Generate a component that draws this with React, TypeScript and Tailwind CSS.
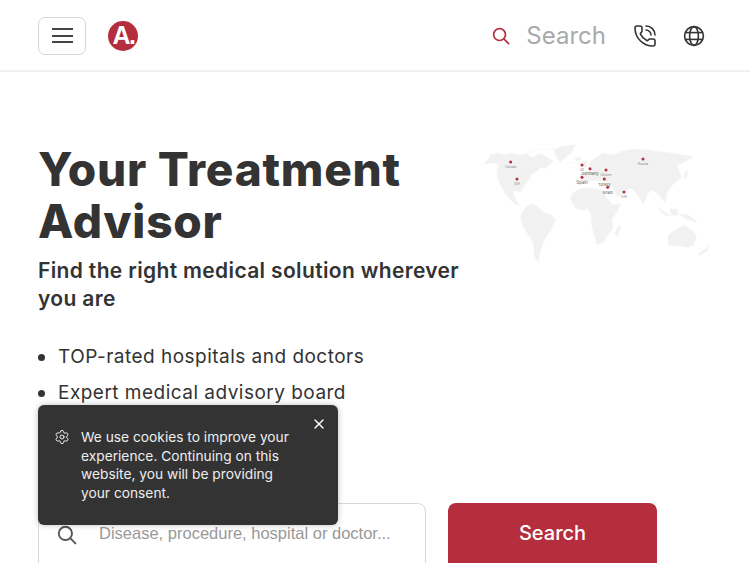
import { PhoneCall, Settings, X } from "lucide-react";

const land = [
  // North America
  "M42 102 L58 84 L62 74 L84 70 L104 74 L128 70 L150 76 L172 72 L186 84 L200 76 L216 72 L232 84 L250 92 L236 104 L226 116 L214 112 L200 124 L186 130 L178 146 L166 164 L158 174 L150 188 L138 180 L128 184 L134 204 L148 226 L136 222 L120 208 L104 188 L94 168 L84 146 L80 128 L86 104 L66 98 Z",
  // Greenland
  "M252 60 L272 50 L316 44 L306 66 L284 84 L270 96 L258 80 Z",
  // South America
  "M154 250 L168 232 L186 222 L206 232 L218 246 L240 254 L258 268 L248 288 L236 310 L224 328 L216 350 L208 372 L206 394 L196 386 L192 360 L190 338 L176 316 L160 288 L152 268 Z",
  // Africa
  "M300 206 L306 192 L328 176 L352 174 L386 178 L400 186 L414 208 L430 224 L452 222 L440 246 L426 268 L428 296 L412 318 L398 340 L380 342 L372 312 L364 280 L364 252 L354 238 L336 240 L316 234 Z",
  // Eurasia
  "M330 152 L332 132 L348 128 L364 118 L358 102 L372 86 L398 70 L430 76 L456 64 L490 58 L530 60 L570 66 L620 72 L670 80 L650 92 L634 100 L622 106 L628 128 L634 142 L614 158 L600 174 L590 192 L586 218 L572 202 L560 186 L540 180 L530 200 L520 222 L508 204 L496 184 L480 174 L458 190 L442 200 L432 180 L424 158 L400 154 L384 150 L366 152 Z",
  // Australia
  "M594 316 L614 302 L640 286 L664 300 L680 322 L670 346 L650 352 L624 346 L596 346 Z",
  // Madagascar
  "M442 292 L452 286 L448 306 L440 318 L435 312 Z",
  // South-east Asia islands
  "M566 234 L584 246 L602 258 L588 256 L570 244 Z",
  "M600 236 L624 240 L620 258 L604 254 Z",
  "M628 252 L660 258 L682 276 L650 268 Z",
  // UK, Iceland, Japan
  "M338 100 L348 92 L350 112 L340 114 Z",
  "M316 84 L332 80 L330 90 L318 92 Z",
  "M640 140 L650 122 L654 130 L646 146 Z",
  // New Zealand
  "M684 372 L716 350 L712 362 L690 376 Z",
];
const pins: [number, number, string, number][] = [
  [122, 96, "Canada", 9],
  [141, 147, "USA", 9],
  [336, 105, "UK", 9],
  [360, 116, "Germany", 12],
  [336, 142, "Spain", 13],
  [408, 120, "Ukraine", 9],
  [403, 147, "Turkey", 12],
  [413, 172, "Israel", 12],
  [462, 186, "UAE", 9],
  [519, 87, "Russia", 10],
];

function WorldMap() {
  return (
    <svg viewBox="0 0 780 450" width="260" height="150" className="block">
      <defs>
        <pattern id="dots" width="6" height="6" patternUnits="userSpaceOnUse">
          <rect width="6" height="6" fill="#f3f3f3" />
          <circle cx="3" cy="3" r="1.2" fill="#e8e8e8" />
        </pattern>
      </defs>
      {land.map((d) => (
        <path key={d} d={d} fill="url(#dots)" stroke="#f3f3f3" strokeWidth="2" strokeLinejoin="round" />
      ))}
      <path d="M140 145 Q240 80 336 104" fill="none" stroke="#ececec" strokeWidth="2" strokeDasharray="3 3" />
      <path d="M120 95 Q250 10 360 116" fill="none" stroke="#f0f0f0" strokeWidth="2" strokeDasharray="3 3" />
      <path d="M415 120 Q480 55 519 87" fill="none" stroke="#f0f0f0" strokeWidth="2" strokeDasharray="3 3" />
      {pins.map(([x, y, name, size]) => (
        <g key={name}>
          <circle cx={x} cy={y} r="4.5" fill="#b52e3e" />
          <text
            x={x}
            y={y + 8 + size}
            textAnchor="middle"
            fontSize={size}
            fill={size > 10 ? "#555" : "#888"}
          >
            {name}
          </text>
        </g>
      ))}
    </svg>
  );
}

function Magnifier({ className }: { className: string }) {
  return (
    <svg viewBox="0 0 20 20" fill="none" stroke="currentColor" strokeWidth="1.9" strokeLinecap="round" className={className}>
      <circle cx="8.4" cy="8.4" r="6.6" />
      <line x1="13.2" y1="13.2" x2="18.4" y2="18.4" />
    </svg>
  );
}

function GlobeIcon() {
  return (
    <svg viewBox="0 0 22 22" fill="none" stroke="#333" strokeWidth="1.6" className="ml-[26px] h-[22px] w-[22px]">
      <circle cx="11" cy="11" r="9.4" />
      <ellipse cx="11" cy="11" rx="4.4" ry="9.4" />
      <line x1="2.6" y1="7.6" x2="19.4" y2="7.6" />
      <line x1="2.6" y1="14.4" x2="19.4" y2="14.4" />
    </svg>
  );
}

export default function App() {
  return (
    <div className="relative h-[563px] w-[750px] overflow-hidden bg-white font-['Inter',sans-serif] text-[#333]">
      <header className="flex h-[72px] items-center justify-between border-b-2 border-[#f0f0f0] pl-[38px] pr-[45px] pt-[1px]">
        <div className="flex items-center gap-[22px]">
          <button className="flex h-[38px] w-[48px] flex-col items-center justify-center gap-[4.5px] rounded-[7px] border border-[#d5d5d5]">
            <span className="h-[2px] w-[21px] bg-[#444]" />
            <span className="h-[2px] w-[21px] bg-[#444]" />
            <span className="h-[2px] w-[21px] bg-[#444]" />
          </button>
          <div className="flex h-[30px] w-[30px] items-center justify-center rounded-full bg-[#b52e3e] pb-[1px] pl-[1px] font-['Liberation_Sans',sans-serif] text-[25px] font-bold leading-none tracking-[-1.5px] text-white">
            A.
          </div>
        </div>
        <div className="flex items-center">
          <Magnifier className="h-[18px] w-[18px] text-[#b52e3e]" />
          <span className="ml-[16px] text-[24px] text-[#aaaaaa]">Search</span>
          <PhoneCall size={24} strokeWidth={1.6} className="ml-[27px]" />
          <GlobeIcon />
        </div>
      </header>

      <main className="flex pl-[38px] pt-[71px]">
        <div className="w-[432px] shrink-0">
          <h1 className="whitespace-nowrap text-[46px] font-extrabold leading-[52px] tracking-[0.75px]">
            Your Treatment
            <br />
            Advisor
          </h1>
          <p className="mt-[10px] text-[21px] font-semibold leading-[28px] tracking-[0.35px]">
            Find the right medical solution wherever you are
          </p>
          <ul className="mt-[26px] text-[19px] leading-[36px] tracking-[0.48px]">
            <li className="flex items-center gap-[13px]">
              <span className="h-[7px] w-[7px] rounded-full bg-[#333]" />
              TOP-rated hospitals and doctors
            </li>
            <li className="flex items-center gap-[13px]">
              <span className="h-[7px] w-[7px] rounded-full bg-[#333]" />
              Expert medical advisory board
            </li>
          </ul>
          <div className="mt-[92px] flex w-[619px] gap-[22px]">
            <div className="flex h-[80px] w-[388px] items-start rounded-[8px] border border-[#d9d9d9] pl-[18px] pt-[21px]">
              <Magnifier className="h-[20px] w-[20px] text-[#555]" />
              <span className="ml-[22px] -mt-[2px] font-['Liberation_Sans',sans-serif] text-[16.5px] leading-[20px] text-[#999]">
                Disease, procedure, hospital or doctor...
              </span>
            </div>
            <button className="flex h-[80px] w-[209px] items-start justify-center rounded-[8px] bg-[#b52e3e] pt-[15px] text-[20px] font-medium text-white">
              Search
            </button>
          </div>
        </div>
        <div className="-mt-[13px]">
          <WorldMap />
        </div>
      </main>

      <div className="absolute left-[38px] top-[405px] flex h-[120px] w-[300px] rounded-[6px] bg-[#333] pl-[16px] pt-[23px] text-white shadow-[0_0_6px_rgba(0,0,0,0.25)]">
        <Settings size={16} strokeWidth={1.5} className="mt-[1px] shrink-0 text-[#eee]" />
        <p className="ml-[11px] w-[212px] text-[13.75px] leading-[18.7px] text-[#eee]">
          We use cookies to improve your experience. Continuing on this website, you will be providing your consent.
        </p>
        <X size={16} strokeWidth={2} className="absolute right-[11px] top-[11px]" />
      </div>
    </div>
  );
}
